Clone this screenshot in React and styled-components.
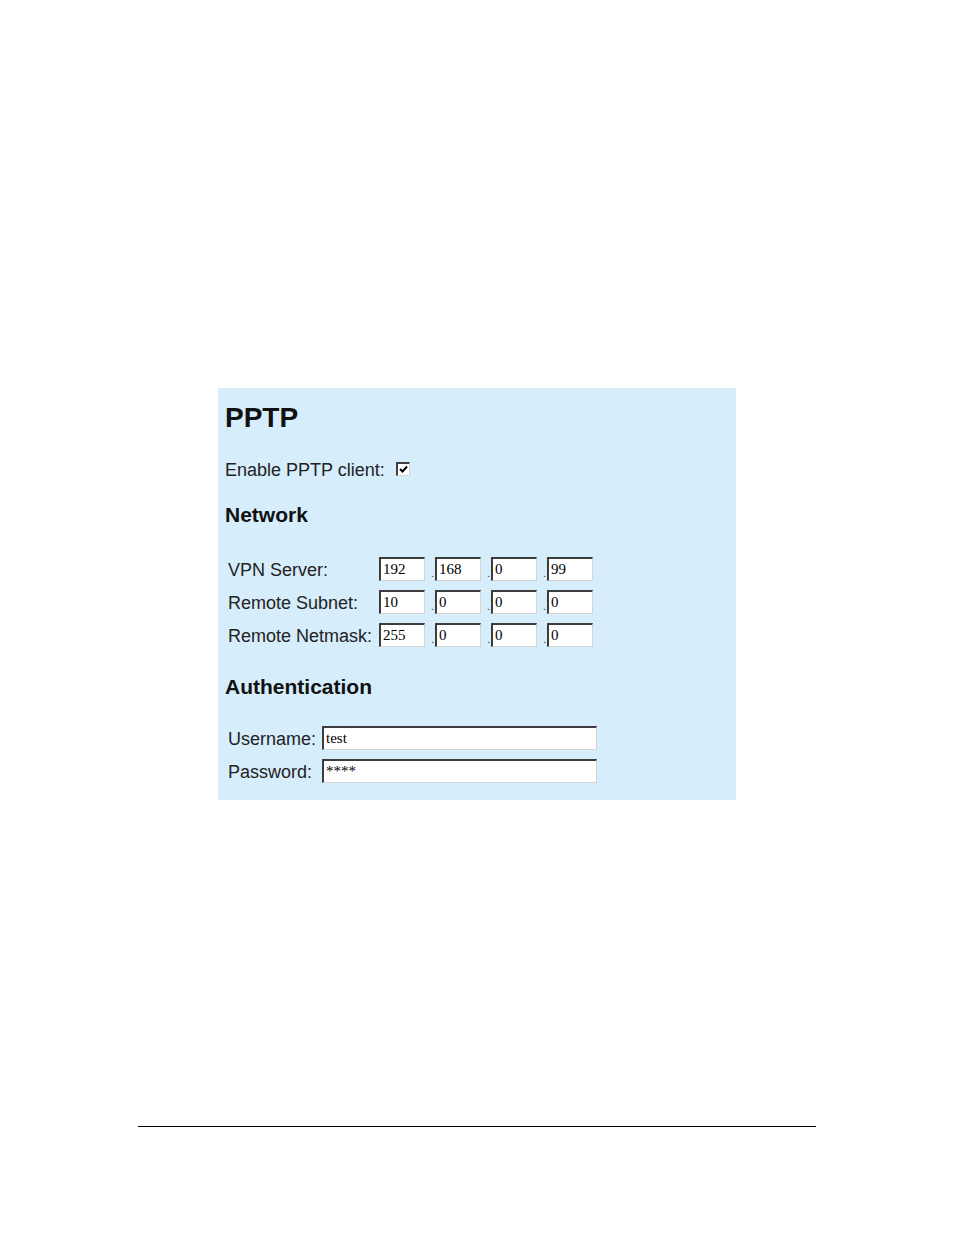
import React from "react";
import styled, { createGlobalStyle } from "styled-components";

const GlobalStyle = createGlobalStyle`
  body {
    margin: 0;
    background: #ffffff;
  }
`;

const Page = styled.div`
  box-sizing: border-box;
  height: 1235px;
  padding: 388px 0 0 218px;
`;

const Panel = styled.div`
  box-sizing: border-box;
  width: 518px;
  height: 412px;
  padding: 14px 0 0 7px;
  background: #d6edfc;
  font-family: "Liberation Sans", Arial, sans-serif;
  color: #222;
`;

const Title = styled.h1`
  margin: 0;
  font-size: 28px;
  line-height: 32px;
  font-weight: bold;
  color: #111;
`;

const EnableRow = styled.div`
  margin-top: 26px;
  font-size: 18px;
  line-height: 20px;
`;

const CheckBox = styled.span`
  display: inline-block;
  box-sizing: border-box;
  width: 14px;
  height: 14px;
  margin-left: 11px;
  background: #fff;
  border-top: 2px solid #404040;
  border-left: 2px solid #404040;
  border-right: 1px solid #d8d8d8;
  border-bottom: 1px solid #d8d8d8;

  svg {
    display: block;
  }
`;

const Section = styled.h2`
  margin: ${(p) => p.$top}px 0 0;
  font-size: 21px;
  line-height: 24px;
  font-weight: bold;
  color: #111;
`;

const FieldGrid = styled.div`
  display: grid;
  grid-template-columns: auto auto;
  justify-content: start;
  column-gap: ${(p) => p.$gap}px;
  row-gap: 7px;
  margin: ${(p) => p.$top}px 0 0 3px;
`;

const Label = styled.div`
  font-size: 18px;
  line-height: 26px;
  white-space: nowrap;
`;

const IpGroup = styled.div`
  display: flex;
  align-items: flex-start;
`;

const Field = styled.input`
  box-sizing: border-box;
  width: ${(p) => p.$w}px;
  height: 24px;
  margin: 0;
  padding: 0 2px;
  background: #fff;
  color: #000;
  font-family: "Liberation Serif", "Times New Roman", serif;
  font-size: 15px;
  border-top: 2px solid #3c3c3c;
  border-left: 2px solid #3c3c3c;
  border-right: 1px solid #d4d4d4;
  border-bottom: 1px solid #d4d4d4;
  outline: none;
`;

const Dot = styled.span`
  display: flex;
  align-items: flex-end;
  justify-content: flex-end;
  box-sizing: border-box;
  width: 10px;
  height: 24px;
  padding: 0 1px 2px 0;
  font-family: "Liberation Serif", serif;
  font-size: 11px;
  line-height: 1;
  color: #333;
`;

const FootLine = styled.div`
  width: 678px;
  margin: 326px 0 0 -80px;
  border-top: 1.5px solid #000;
`;

const ipRows = [
  { label: "VPN Server:", octets: ["192", "168", "0", "99"] },
  { label: "Remote Subnet:", octets: ["10", "0", "0", "0"] },
  { label: "Remote Netmask:", octets: ["255", "0", "0", "0"] },
];

const IpField = ({ octets }) => (
  <IpGroup>
    {octets.map((o, i) => (
      <React.Fragment key={i}>
        {i > 0 && <Dot>.</Dot>}
        <Field $w={46} defaultValue={o} />
      </React.Fragment>
    ))}
  </IpGroup>
);

export default function App() {
  return (
    <Page>
      <GlobalStyle />
      <Panel>
        <Title>PPTP</Title>
        <EnableRow>
          Enable PPTP client:
          <CheckBox>
            <svg width="11" height="11" viewBox="0 0 11 11">
              <path d="M2 5 L4.5 7.5 L9 2.5" stroke="#000" strokeWidth="2" fill="none" />
            </svg>
          </CheckBox>
        </EnableRow>

        <Section $top={23}>Network</Section>
        <FieldGrid $top={30} $gap={7}>
          {ipRows.map((r) => (
            <React.Fragment key={r.label}>
              <Label>{r.label}</Label>
              <IpField octets={r.octets} />
            </React.Fragment>
          ))}
        </FieldGrid>

        <Section $top={26}>Authentication</Section>
        <FieldGrid $top={27} $gap={6}>
          <Label>Username:</Label>
          <Field $w={275} defaultValue="test" />
          <Label>Password:</Label>
          <Field $w={275} defaultValue="****" />
        </FieldGrid>
      </Panel>
      <FootLine />
    </Page>
  );
}
